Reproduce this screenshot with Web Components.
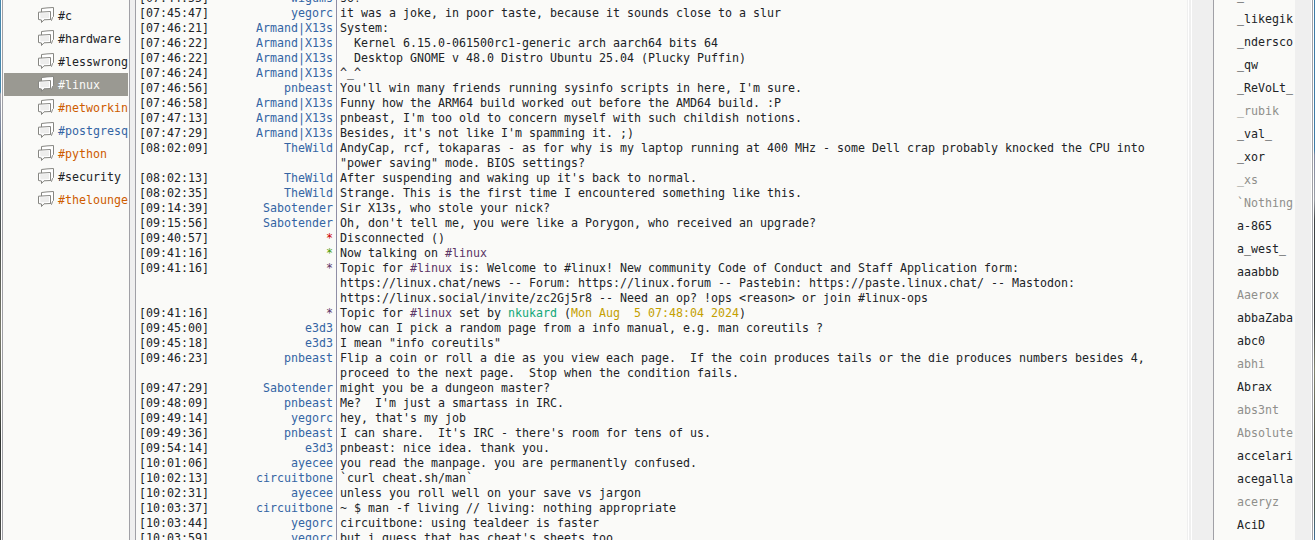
<!DOCTYPE html>
<html lang="en">
<head>
<meta charset="utf-8">
<title>#linux</title>
<style>
  html, body {
    margin: 0;
    height: 100%;
    overflow: hidden;
  }
  body {
    font: 11.63px/15px "DejaVu Sans Mono", monospace;
    color: #202326;
    background: #efefef;
  }
</style>
</head>
<body>
<irc-window></irc-window>

<script>
// One channel in the left hand tree
class ChannelItem extends HTMLElement {
  constructor () {
    super();
    const shadow = this.attachShadow({ mode: 'open' });
    shadow.innerHTML = `
    <style>
      :host {
        display: flex;
        align-items: center;
        height: 23px;
        padding-left: 33px;
        overflow: hidden;
        white-space: pre;
      }
      :host([state="selected"]) { background: #9a9992; color: #fafaf8; }
      :host([state="alert"]) { color: #ce5c00; }
      :host([state="message"]) { color: #3465a4; }
      svg { flex: none; width: 18px; height: 17px; margin-right: 3px; }
      span { padding-top: 2px; }
    </style>
    <svg viewBox="0 0 18 17" stroke-linejoin="round">
      <path d="M4.5 1.5 10 .9 16.5 .5V9.5L15.5 10.5 14.5 13.5 12 11H4.5z" fill="#fff" stroke="#868682"/>
      <path d="M1.5 5.2 13.5 4.5V12.5L7 12.8 4.5 15.5V13L1.5 12.5z" fill="#fff" stroke="#868682"/>
      <path d="M3 6.3 12 6V11L3.5 11.5z" fill="#ededec"/>
    </svg>
    <span><slot></slot></span>`;
  }
}
customElements.define('channel-item', ChannelItem);

// One line of the conversation: time, nick and text
class ChatLine extends HTMLElement {
  constructor () {
    super();
    const shadow = this.attachShadow({ mode: 'open' });
    shadow.innerHTML = `
    <style>
      :host { display: flex; white-space: pre; }
      .time { width: 70px; padding-left: 3px; }
      .nick {
        width: 124px;
        text-align: right;
        color: #3465a4;
      }
      .text {
        margin-left: 3px;
        padding-left: 3px;
        border-left: 1px solid #8f8ea6;
      }
      :host([kind="error"]) .nick { color: #cc0000; }
      :host([kind="join"]) .nick { color: #4e9a06; }
      :host([kind="topic"]) .nick { color: #5c3566; }
    </style>
    <div class="time"></div>
    <div class="nick"></div>
    <div class="text"><slot></slot></div>`;
  }

  connectedCallback () {
    this.shadowRoot.querySelector('.time').textContent = '[' + this.getAttribute('time') + ']';
    this.shadowRoot.querySelector('.nick').textContent = this.getAttribute('nick');
  }
}
customElements.define('chat-line', ChatLine);

// One name in the user list
class UserItem extends HTMLElement {
  constructor () {
    super();
    const shadow = this.attachShadow({ mode: 'open' });
    shadow.innerHTML = `
    <style>
      :host {
        display: block;
        height: 23px;
        line-height: 23px;
        padding-left: 23px;
      }
      :host([away]) { color: #8f8f8b; }
    </style>
    <slot></slot>`;
  }
}
customElements.define('user-item', UserItem);

const channels = [
  ['#c', ''],
  ['#hardware', ''],
  ['#lesswrong', ''],
  ['#linux', 'selected'],
  ['#networkin', 'alert'],
  ['#postgresq', 'message'],
  ['#python', 'alert'],
  ['#security', ''],
  ['#thelounge', 'alert'],
];

const chan = '<span style="color:#5c3566">#linux</span>';

// time, nick, text, kind
const lines = [
  ['07:44:55', 'wigums', 'so?'],
  ['07:45:47', 'yegorc', 'it was a joke, in poor taste, because it sounds close to a slur'],
  ['07:46:21', 'Armand|X13s', 'System:'],
  ['07:46:22', 'Armand|X13s', '  Kernel 6.15.0-061500rc1-generic arch aarch64 bits 64'],
  ['07:46:22', 'Armand|X13s', '  Desktop GNOME v 48.0 Distro Ubuntu 25.04 (Plucky Puffin)'],
  ['07:46:24', 'Armand|X13s', '^_^'],
  ['07:46:56', 'pnbeast', 'You\'ll win many friends running sysinfo scripts in here, I\'m sure.'],
  ['07:46:58', 'Armand|X13s', 'Funny how the ARM64 build worked out before the AMD64 build. :P'],
  ['07:47:13', 'Armand|X13s', 'pnbeast, I\'m too old to concern myself with such childish notions.'],
  ['07:47:29', 'Armand|X13s', 'Besides, it\'s not like I\'m spamming it. ;)'],
  ['08:02:09', 'TheWild', 'AndyCap, rcf, tokaparas - as for why is my laptop running at 400 MHz - some Dell crap probably knocked the CPU into\n"power saving" mode. BIOS settings?'],
  ['08:02:13', 'TheWild', 'After suspending and waking up it\'s back to normal.'],
  ['08:02:35', 'TheWild', 'Strange. This is the first time I encountered something like this.'],
  ['09:14:39', 'Sabotender', 'Sir X13s, who stole your nick?'],
  ['09:15:56', 'Sabotender', 'Oh, don\'t tell me, you were like a Porygon, who received an upgrade?'],
  ['09:40:57', '*', 'Disconnected ()', 'error'],
  ['09:41:16', '*', `Now talking on ${chan}`, 'join'],
  ['09:41:16', '*', `Topic for ${chan} is: Welcome to #linux! New community Code of Conduct and Staff Application form:\nhttps://linux.chat/news -- Forum: https://linux.forum -- Pastebin: https://paste.linux.chat/ -- Mastodon:\nhttps://linux.social/invite/zc2Gj5r8 -- Need an op? !ops &lt;reason&gt; or join #linux-ops`, 'topic'],
  ['09:41:16', '*', `Topic for ${chan} set by <span style="color:#11a879">nkukard</span> (<span style="color:#c4a000">Mon Aug  5 07:48:04 2024</span>)`, 'topic'],
  ['09:45:00', 'e3d3', 'how can I pick a random page from a info manual, e.g. man coreutils ?'],
  ['09:45:18', 'e3d3', 'I mean "info coreutils"'],
  ['09:46:23', 'pnbeast', 'Flip a coin or roll a die as you view each page.  If the coin produces tails or the die produces numbers besides 4,\nproceed to the next page.  Stop when the condition fails.'],
  ['09:47:29', 'Sabotender', 'might you be a dungeon master?'],
  ['09:48:09', 'pnbeast', 'Me?  I\'m just a smartass in IRC.'],
  ['09:49:14', 'yegorc', 'hey, that\'s my job'],
  ['09:49:36', 'pnbeast', 'I can share.  It\'s IRC - there\'s room for tens of us.'],
  ['09:54:14', 'e3d3', 'pnbeast: nice idea. thank you.'],
  ['10:01:06', 'ayecee', 'you read the manpage. you are permanently confused.'],
  ['10:02:13', 'circuitbone', '`curl cheat.sh/man`'],
  ['10:02:31', 'ayecee', 'unless you roll well on your save vs jargon'],
  ['10:03:37', 'circuitbone', '~ $ man -f living // living: nothing appropriate'],
  ['10:03:44', 'yegorc', 'circuitbone: using tealdeer is faster'],
  ['10:03:59', 'yegorc', 'but i guess that has cheat\'s sheets too'],
];

// names with a leading "-" are away
const users = [
  '_', '_likegik', '_ndersco', '_qw', '_ReVoLt_', '-_rubik', '_val_', '_xor',
  '-_xs', '-`Nothing', 'a-865', 'a_west_', 'aaabbb', '-Aaerox', 'abbaZaba',
  'abc0', '-abhi', 'Abrax', '-abs3nt', '-Absolute', 'accelari', 'acegalla',
  '-aceryz', 'AciD',
];

// The whole window: tree, conversation and user list side by side
class IrcWindow extends HTMLElement {
  constructor () {
    super();
    const shadow = this.attachShadow({ mode: 'open' });
    shadow.innerHTML = `
    <style>
      :host { display: flex; height: 540px; overflow: hidden; }
      :host > * { flex: none; box-sizing: border-box; overflow: hidden; }
      /* strips of the desktop that show beside the window */
      .desk {
        width: 1px;
        background: linear-gradient(#4587ad 0 92px, #a5a5ad 94px, #6d7c96 135px, #55606c 155px, #4a4f4c 240px, #77786a 330px, #555a50 400px, #303432 440px, #4a4c4a 540px);
      }
      .desk.right {
        background: linear-gradient(#3d7ba5 0 150px, #8088a0 155px, #9a9ea6 200px, #3c4244 220px, #3a3f40 320px, #80836f 370px, #4c5044 440px, #4a5a50 510px, #3f6f98 540px);
      }
      .frame {
        width: 2px;
        border-left: 1px solid #fff;
        background: #a0a0a6;
      }
      .tree {
        width: 127px;
        padding: 4px 1px 0;
        background: #fafaf8;
        border-right: 1px solid #a0a0a6;
      }
      .gap { width: 5px; }
      .chat {
        width: 1052px;
        background: #fafaf8;
        border-left: 1px solid #a0a0a6;
      }
      .lines { margin-top: -9px; }
      .bar {
        width: 26px;
        background: linear-gradient(90deg, #efefef 1px, #fff 1px 2px, #efefef 2px 4px, #fff 4px 5px, #efefef 5px);
      }
      .users {
        width: 82px;
        background: #fafaf8;
        border-left: 1px solid #a0a0a6;
      }
      .names { margin-top: -15px; }
      .bar2 { width: 16px; }
      .end { width: 1px; background: #fff; }
    </style>
    <div class="desk"></div>
    <div class="frame"></div>
    <div class="tree">${channels.map(c => `<channel-item state="${c[1]}">${c[0]}</channel-item>`).join('')}</div>
    <div class="gap"></div>
    <div class="chat"><div class="lines">${lines.map(l => `<chat-line time="${l[0]}" nick="${l[1]}" kind="${l[3] || ''}">${l[2]}</chat-line>`).join('')}</div></div>
    <div class="bar"></div>
    <div class="users"><div class="names">${users.map(u => u[0] === '-' ? `<user-item away>${u.slice(1)}</user-item>` : `<user-item>${u}</user-item>`).join('')}</div></div>
    <div class="bar2"></div>
    <div class="frame"></div>
    <div class="end"></div>
    <div class="desk right"></div>`;
  }
}
customElements.define('irc-window', IrcWindow);
</script>
</body>
</html>
